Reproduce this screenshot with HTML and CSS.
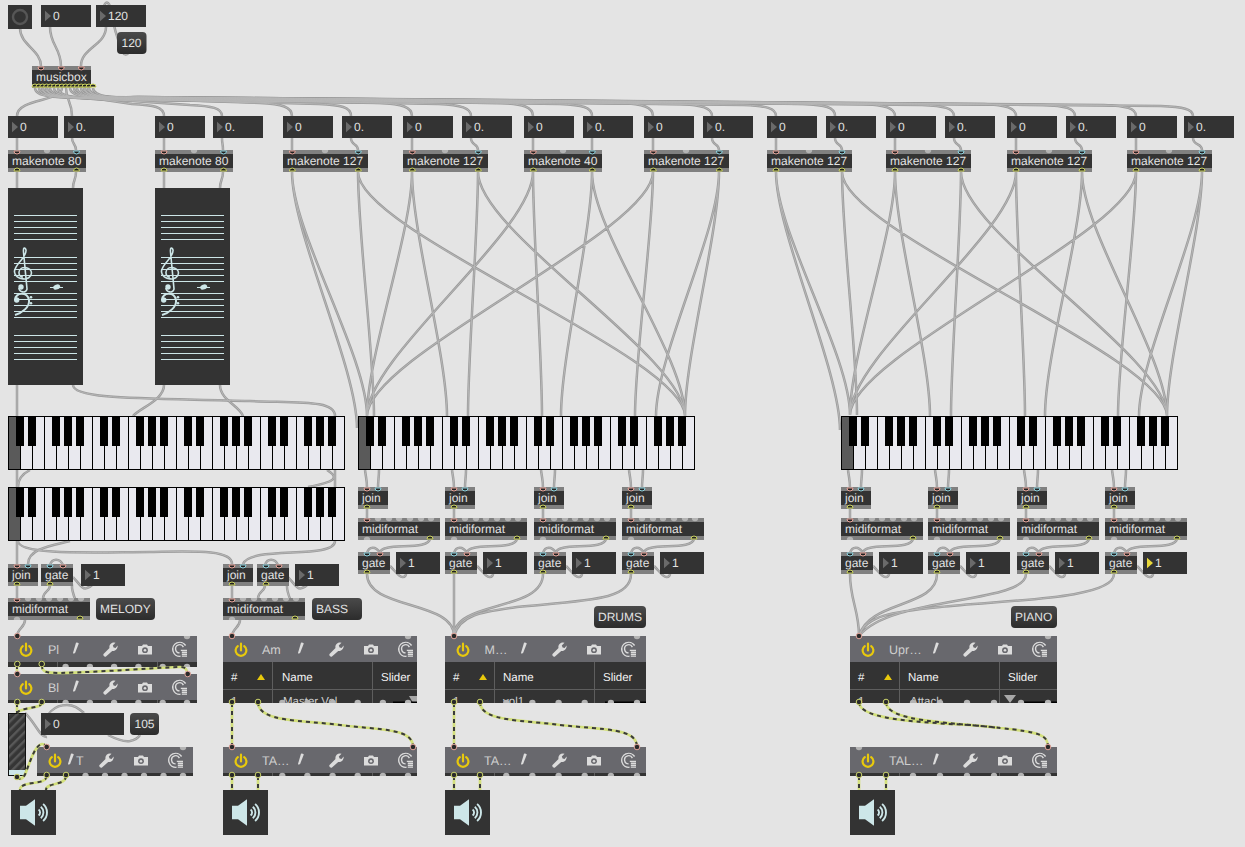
FILE: index.html
```html
<!DOCTYPE html>
<html lang="en">
<head>
<meta charset="utf-8">
<title>musicbox patcher</title>
<link rel="stylesheet" href="styles.css">
</head>
<body>
<svg class="patcher" width="1245" height="847" viewBox="0 0 1245 847" xmlns="http://www.w3.org/2000/svg">
<defs>
  <linearGradient id="msg" x1="0" y1="0" x2="0" y2="1"><stop offset="0" stop-color="#4a4a4a"/><stop offset="1" stop-color="#2c2c2c"/></linearGradient>
  <pattern id="hatch" width="6" height="6" patternUnits="userSpaceOnUse" patternTransform="rotate(-45)"><rect width="6" height="6" fill="#353535"/><rect width="6" height="2.4" fill="#585858"/></pattern>

  <!-- ports -->
  <path id="in-r" class="port-in" d="M-3 0a3 3 0 0 0 6 0z"/>
  <path id="in-b" class="port-blue" d="M-3 0a3 3 0 0 0 6 0z"/>
  <path id="out" class="port-out" d="M-3 0a3 3 0 0 1 6 0z"/>
  <circle id="sig-out" class="port-sig" r="2.8"/>
  <circle id="sig-in" class="port-sigin" r="2.8"/>
  <path id="bump-top" class="bump" d="M-3.2 0a3.2 3.2 0 0 0 6.4 0z"/>
  <path id="bump-bot" class="bump" d="M-3.2 0a3.2 3.2 0 0 1 6.4 0z"/>
  <polygon id="tri" class="tri" points="4,5.7 10,11 4,16.3"/>

  <!-- toolbar icons -->
  <g id="i-power" class="power"><path d="M-3.2 -4.4A5.4 5.4 0 1 0 3.2 -4.4"/><path d="M0 -6.8V0"/></g>
  <path id="i-pencil" class="glyph" d="M1 -5.8Q2.6 -6.2 3.8 -5L.2 4.2L-1.4 5.4L-1.8 3.8z"/>
  <path id="i-wrench" class="glyph" d="M-6.5 4.5L-.5 -1.5C-1.2 -4.5 1 -7 4 -7L5.5 -6.7L2.8 -4L3.6 -2L5.6 -1.6L7.6 -4C8 -1 5.5 2 2.2 1.5L-4 7C-5 8 -7.5 6 -6.5 4.5z"/>
  <g id="i-camera"><path class="glyph" d="M-7 -3.5H-3L-2 -5H2L3 -3.5H7V5H-7z"/><circle class="lens" cy=".7" r="2.9"/><circle class="glyph" cy=".7" r="1.3"/></g>
  <g id="i-preset" class="preset"><path d="M5.6 -4A7 7 0 1 0 .5 6.8"/><path d="M3.4 -2.4A4.1 4.1 0 1 0 -.4 3.4"/><path d="M.8 .9H7M1.8 2.8H7M1.8 4.7H7M1.8 6.6H7"/></g>

  <!-- bottom-edge bumps of plugin panels, one set per panel width -->
  <g id="b189"><use href="#bump-bot" x="57.6"/><use href="#bump-bot" x="81.9"/><use href="#bump-bot" x="106.1"/><use href="#bump-bot" x="130.4"/><use href="#bump-bot" x="154.7"/><use href="#bump-bot" x="179"/></g>
  <g id="b156"><use href="#bump-bot" x="48.5"/><use href="#bump-bot" x="68"/><use href="#bump-bot" x="87.5"/><use href="#bump-bot" x="107"/><use href="#bump-bot" x="126.5"/><use href="#bump-bot" x="146"/></g>
  <g id="b194"><use href="#bump-bot" x="59.3"/><use href="#bump-bot" x="84.4"/><use href="#bump-bot" x="109.6"/><use href="#bump-bot" x="134.7"/><use href="#bump-bot" x="159.9"/><use href="#bump-bot" x="185"/></g>
  <g id="b201"><use href="#bump-bot" x="61.3"/><use href="#bump-bot" x="87.4"/><use href="#bump-bot" x="113.6"/><use href="#bump-bot" x="139.7"/><use href="#bump-bot" x="165.9"/><use href="#bump-bot" x="192"/></g>
  <g id="b207"><use href="#bump-bot" x="63"/><use href="#bump-bot" x="90"/><use href="#bump-bot" x="117"/><use href="#bump-bot" x="144"/><use href="#bump-bot" x="171"/><use href="#bump-bot" x="198"/></g>

  <!-- piano keyboard -->
  <g id="kb">
    <rect class="kb-white" x=".5" y=".5" width="336" height="53"/>
    <rect class="kb-off" x="1" y="1" width="11.5" height="52"/>
    <path class="kb-lines" d="M12.5 0V54M24.5 0V54M36.5 0V54M48.5 0V54M60.5 0V54M72.5 0V54M84.5 0V54M96.5 0V54M108.5 0V54M120.5 0V54M132.5 0V54M144.5 0V54M156.5 0V54M168.5 0V54M180.5 0V54M192.5 0V54M204.5 0V54M216.5 0V54M228.5 0V54M240.5 0V54M252.5 0V54M264.5 0V54M276.5 0V54M288.5 0V54M300.5 0V54M312.5 0V54M324.5 0V54"/>
    <path class="kb-black" d="M8 0h8v30h-8zM20 0h8v30h-8zM44 0h8v30h-8zM56 0h8v30h-8zM68 0h8v30h-8zM92 0h8v30h-8zM104 0h8v30h-8zM128 0h8v30h-8zM140 0h8v30h-8zM152 0h8v30h-8zM176 0h8v30h-8zM188 0h8v30h-8zM212 0h8v30h-8zM224 0h8v30h-8zM236 0h8v30h-8zM260 0h8v30h-8zM272 0h8v30h-8zM296 0h8v30h-8zM308 0h8v30h-8zM320 0h8v30h-8z"/>
  </g>

  <!-- staff display -->
  <g id="nslider">
    <rect class="body" x="8" y="188" width="75" height="197"/>
    <path class="staff" d="M14 215.5H77M14 221.5H77M14 227.5H77M14 233.5H77M14 239.5H77M14 257.5H77M14 263.5H77M14 269.5H77M14 275.5H77M14 281.5H77M14 293.5H77M14 299.5H77M14 305.5H77M14 311.5H77M14 317.5H77M14 335.5H77M14 341.5H77M14 347.5H77M14 353.5H77M14 359.5H77"/>
    <path class="clef" d="M19 288C19 292 26 294 27 289L23.5 252C23 247 25 247 26 250C27 258 14 264 14.5 272C15 280 31 282 31.5 273C31.5 267 20 265 19 272C18.7 276 21 277 23 277"/>
    <circle class="ink" cx="21" cy="287" r="2.7"/>
    <path class="bass" d="M15.5 299C15 293 27 291 29 300C30 307 22 313 15 315"/>
    <circle class="ink" cx="16.7" cy="300" r="2.7"/>
    <circle class="ink" cx="31" cy="297.3" r="1.3"/>
    <circle class="ink" cx="31" cy="303.3" r="1.3"/>
    <path class="staff" d="M50 287.5H63"/>
    <ellipse class="ink" cx="56.7" cy="287" rx="3.6" ry="2.5" transform="rotate(-20 56.7 287)"/>
  </g>

  <!-- speaker -->
  <g id="ezdac">
    <rect class="body" width="45" height="45"/>
    <polygon class="ink" points="9,15.7 15,15.7 24,9.3 24,35.7 15,29.3 9,29.3"/>
    <path class="waves" d="M27.6 19.4A4 4 0 0 1 27.6 25.6M29.8 16.8A7.5 7.5 0 0 1 29.8 28.2M32.1 14.1A11 11 0 0 1 32.1 30.9"/>
  </g>

  <!-- cables inside one drum/piano channel -->
  <g id="col">
    <path d="M7 470C8 478 9 480 9 488M21 470C21 478 20 480 20 488M9 508V519M72 538C72 552 22 541 22 553M9 553C11 546 18 546 22 553M32 566C38 572 42 578 45 577C47 577 48 575 48 574"/>
  </g>
  <g id="mel">
    <path d="M9 586V598M72 619C72 605 63 595 64 585L55 566M42 585C42 592 36 590 35 598M65 577C72 585 75 590 79 588C82 587 83 586 84 585M42 565C44 558 52 558 55 565M17 620C17 628 9 628 9 637"/>
  </g>

  <!-- all patch cords -->
  <g id="cords">
    <path d="M20 28C20 45 41 50 41 66M50 27C50 45 61 48 61 66M106 27C106 45 81 48 81 66"/>
    <path d="M104 6C106 0 110 1 112 15C114 30 118 40 122 50C123 55 127 56 129 52"/>
    <path d="M62 88C62 102 17 98 17 116M66 88C66 100 72 102 72 116"/>
    <path d="M35 88C35 97 55 98 85 97L132 104C154 105 164 107 164 116"/>
    <path d="M39 88C39 97 59 98 89 98L190 105C212 106 222 108 222 116"/>
    <path d="M43 88C43 97 63 98 93 97.5L260 103C282 104 292 107 292 116"/>
    <path d="M47 88C47 97 67 98 97 98L319 104C341 105 351 107 351 116"/>
    <path d="M50 88C50 97 70 98 100 99L380 103C402 104 412 107 412 116"/>
    <path d="M54 88C54 97 74 98 104 97.5L439 104C461 105 471 108 471 116"/>
    <path d="M58 88C58 97 78 98 108 100L501 103C523 104 533 107 533 116"/>
    <path d="M70 88C70 97 90 98 120 97.5L560 104C582 105 592 107 592 116"/>
    <path d="M74 88C74 97 94 98 124 99L621 103C643 104 653 107 653 116"/>
    <path d="M77 88C77 97 97 98 127 98L680 104C702 105 712 108 712 116"/>
    <path d="M81 88C81 97 101 98 131 98L744 105C766 106 776 108 776 116"/>
    <path d="M85 88C85 97 105 98 135 97.5L803 104C825 105 835 107 835 116"/>
    <path d="M89 88C89 97 109 98 139 97L863 104C885 105 895 108 895 116"/>
    <path d="M93 88C93 97 113 98 143 98L922 105C944 106 954 108 954 116"/>
    <path d="M46 88C46 97 66 98 96 97L984 104C1006 105 1016 108 1016 116"/>
    <path d="M42 88C42 97 62 98 92 98L1043 105C1065 106 1075 108 1075 116"/>
    <path d="M84 88C84 97 104 98 134 97L1104 105C1126 106 1136 108 1136 116"/>
    <path d="M88 88C88 97 108 98 138 97L1161 106C1183 107 1193 109 1193 116"/>

    <path d="M17 138V150M72 138C72 144 76 144 76 150M164 138V150M222 138C222 144 223 144 223 150M292 138V150M351 138C351 146 358 143 358 150M412 138V150M471 138C471 146 478 143 478 150M533 138V150M592 138V150M653 138V150M712 138C712 146 719 143 719 150M776 138V150M835 138C835 146 842 143 842 150M895 138V150M954 138C954 146 961 143 961 150M1016 138V150M1075 138C1075 146 1082 143 1082 150M1136 138V150M1193 138C1193 146 1202 143 1202 150"/>

    <path d="M17 172V188M76 172C76 180 73 180 73 188M164 172V188M223 172C223 180 220 180 220 188"/>
    <path d="M17 385V564"/>
    <path d="M73 385C73 400 150 398 250 401C300 403 335 400 335 416V541C335 560 250 545 243 564"/>
    <path d="M164 385C164 400 140 408 133 416M220 385C220 400 240 406 243 416"/>
    <path d="M30 470C22 474 18 480 18 487M327 470C340 478 335 482 308 487"/>
    <path d="M18 541C18 556 100 552 150 552C200 551 232 550 232 564M70 541C55 545 28 548 28 564"/>

    <path d="M292 172C292 232 357 368 357 428M292 172C292 232 367 356 367 416M358 172C358 232 374 356 374 416M358 172C358 232 685 356 685 416M412 172C412 232 367 356 367 416M412 172C412 232 447 356 447 416M478 172C478 232 468 356 468 416M478 172C478 232 685 356 685 416M533 172C533 232 367 356 367 416M533 172C533 232 542 356 542 416M592 172C592 232 561 356 561 416M592 172C592 232 685 356 685 416M653 172C653 232 367 356 367 416M653 172C653 232 635 356 635 416M719 172C719 232 656 356 656 416M719 172C719 232 685 356 685 416"/>
    <path d="M776 172C776 232 840 370 840 430M776 172C776 232 850 355 850 415M842 172C842 232 857 355 857 415M842 172C842 232 1167 356 1167 416M895 172C895 232 850 355 850 415M895 172C895 232 930 356 930 416M961 172C961 232 951 356 951 416M961 172C961 232 1167 356 1167 416M1016 172C1016 232 850 355 850 415M1016 172C1016 232 1025 356 1025 416M1082 172C1082 232 1045 356 1045 416M1082 172C1082 232 1167 356 1167 416M1136 172C1136 232 850 355 850 415M1136 172C1136 232 1118 356 1118 416M1202 172C1202 232 1139 356 1139 416M1202 172C1202 232 1167 356 1167 416"/>

    <use href="#col" x="358"/><use href="#col" x="445"/><use href="#col" x="534"/><use href="#col" x="622"/>
    <use href="#col" x="841"/><use href="#col" x="928"/><use href="#col" x="1017"/><use href="#col" x="1105"/>
    <use href="#mel" x="8"/><use href="#mel" x="223"/>

    <path d="M367 574C367 610 454 600 454 636M454 574V636M543 574C543 612 454 600 454 636M631 574C631 600 590 600 517 607C480 612 460 615 454 636"/>
    <path d="M850 574C850 600 859 610 859 636M937 574C937 608 869 600 859 636M1026 574C1026 604 890 596 859 636M1114 574C1114 600 1000 600 940 607C890 612 866 616 859 636"/>

    <path d="M25 713C35 722 40 738 47 737M43 727C46 714 54 705 67 705C74 705 78 708 84 713M108 735C116 739 124 742 130 741C135 740 138 738 140 735"/>
  </g>

  <g id="sigcords">
    <path d="M17 665V674M41.7 665C42 672 46 673 60 673C100 672 170 667 180 667C186 667 187.7 670 187.7 675"/>
    <path d="M17 703V713M41.7 703C41.7 709 20 707 17 713"/>
    <path d="M17 777C20 781 24 778 26 772C30 762 35 745 42 744C45 744 46.7 746 46.7 748"/>
    <path d="M46.7 776C46.7 786 20 780 20 790M66 776C66 786 46 782 46 790"/>
    <path d="M232 703V747M258 702C258 722 300 720 340 725C380 730 413 728 413 747M232 776V790M258 776V790"/>
    <path d="M454 703V747M480 702C480 722 525 720 560 725C605 730 637 728 637 747M454 776V790M480 776V790"/>
    <path d="M859 702C859 725 960 722 1000 728C1040 732 1048 735 1048 747M886 702C886 722 950 722 1000 728M859 776V790M886 776V790"/>
  </g>
</defs>

<rect class="canvas" width="1245" height="847"/>

<use href="#cords" class="cord-edge"/>
<use href="#cords" class="cord-core"/>

<!-- top controls -->
<g transform="translate(8 5)"><rect class="num" width="24" height="24"/><circle class="ring" cx="12" cy="12" r="7"/></g>
<g transform="translate(41 5)"><rect class="num" width="50" height="22"/><use href="#tri"/><text x="12" y="15">0</text></g>
<g transform="translate(96 5)"><rect class="num" width="50" height="22"/><use href="#tri"/><text x="12" y="15">120</text></g>
<g transform="translate(117 32)"><rect class="msg" fill="url(#msg)" width="29.5" height="22" rx="4"/><text x="4.5" y="15">120</text></g>

<g transform="translate(32 66)"><rect class="strip" width="59" height="22"/><rect class="body" y="4" width="59" height="14"/><text x="4" y="15">musicbox</text></g>

<!-- number boxes -->
<g transform="translate(8 116)"><rect class="num" width="50" height="22"/><use href="#tri"/><text x="12" y="15">0</text></g>
<g transform="translate(64 116)"><rect class="num" width="50" height="22"/><use href="#tri"/><text x="12" y="15">0.</text></g>
<g transform="translate(155 116)"><rect class="num" width="50" height="22"/><use href="#tri"/><text x="12" y="15">0</text></g>
<g transform="translate(213 116)"><rect class="num" width="50" height="22"/><use href="#tri"/><text x="12" y="15">0.</text></g>
<g transform="translate(283 116)"><rect class="num" width="50" height="22"/><use href="#tri"/><text x="12" y="15">0</text></g>
<g transform="translate(342 116)"><rect class="num" width="50" height="22"/><use href="#tri"/><text x="12" y="15">0.</text></g>
<g transform="translate(403 116)"><rect class="num" width="50" height="22"/><use href="#tri"/><text x="12" y="15">0</text></g>
<g transform="translate(462 116)"><rect class="num" width="50" height="22"/><use href="#tri"/><text x="12" y="15">0.</text></g>
<g transform="translate(524 116)"><rect class="num" width="50" height="22"/><use href="#tri"/><text x="12" y="15">0</text></g>
<g transform="translate(583 116)"><rect class="num" width="50" height="22"/><use href="#tri"/><text x="12" y="15">0.</text></g>
<g transform="translate(644 116)"><rect class="num" width="50" height="22"/><use href="#tri"/><text x="12" y="15">0</text></g>
<g transform="translate(703 116)"><rect class="num" width="50" height="22"/><use href="#tri"/><text x="12" y="15">0.</text></g>
<g transform="translate(767 116)"><rect class="num" width="50" height="22"/><use href="#tri"/><text x="12" y="15">0</text></g>
<g transform="translate(826 116)"><rect class="num" width="50" height="22"/><use href="#tri"/><text x="12" y="15">0.</text></g>
<g transform="translate(886 116)"><rect class="num" width="50" height="22"/><use href="#tri"/><text x="12" y="15">0</text></g>
<g transform="translate(945 116)"><rect class="num" width="50" height="22"/><use href="#tri"/><text x="12" y="15">0.</text></g>
<g transform="translate(1007 116)"><rect class="num" width="50" height="22"/><use href="#tri"/><text x="12" y="15">0</text></g>
<g transform="translate(1066 116)"><rect class="num" width="50" height="22"/><use href="#tri"/><text x="12" y="15">0.</text></g>
<g transform="translate(1127 116)"><rect class="num" width="50" height="22"/><use href="#tri"/><text x="12" y="15">0</text></g>
<g transform="translate(1184 116)"><rect class="num" width="50" height="22"/><use href="#tri"/><text x="12" y="15">0.</text></g>

<!-- makenote objects -->
<g transform="translate(8 150)"><rect class="strip" width="78" height="22"/><rect class="body" y="4" width="78" height="14"/><text x="4" y="15">makenote 80</text><use href="#bump-top" x="39"/></g>
<g transform="translate(155 150)"><rect class="strip" width="78" height="22"/><rect class="body" y="4" width="78" height="14"/><text x="4" y="15">makenote 80</text><use href="#bump-top" x="39"/></g>
<g transform="translate(283 150)"><rect class="strip" width="85" height="22"/><rect class="body" y="4" width="85" height="14"/><text x="4" y="15">makenote 127</text><use href="#bump-top" x="42"/></g>
<g transform="translate(403 150)"><rect class="strip" width="85" height="22"/><rect class="body" y="4" width="85" height="14"/><text x="4" y="15">makenote 127</text><use href="#bump-top" x="42"/></g>
<g transform="translate(524 150)"><rect class="strip" width="78" height="22"/><rect class="body" y="4" width="78" height="14"/><text x="4" y="15">makenote 40</text><use href="#bump-top" x="39"/></g>
<g transform="translate(644 150)"><rect class="strip" width="85" height="22"/><rect class="body" y="4" width="85" height="14"/><text x="4" y="15">makenote 127</text><use href="#bump-top" x="42"/></g>
<g transform="translate(767 150)"><rect class="strip" width="85" height="22"/><rect class="body" y="4" width="85" height="14"/><text x="4" y="15">makenote 127</text><use href="#bump-top" x="42"/></g>
<g transform="translate(886 150)"><rect class="strip" width="85" height="22"/><rect class="body" y="4" width="85" height="14"/><text x="4" y="15">makenote 127</text><use href="#bump-top" x="42"/></g>
<g transform="translate(1007 150)"><rect class="strip" width="85" height="22"/><rect class="body" y="4" width="85" height="14"/><text x="4" y="15">makenote 127</text><use href="#bump-top" x="42"/></g>
<g transform="translate(1127 150)"><rect class="strip" width="85" height="22"/><rect class="body" y="4" width="85" height="14"/><text x="4" y="15">makenote 127</text><use href="#bump-top" x="42"/></g>

<use href="#nslider"/>
<use href="#nslider" x="147"/>

<use href="#kb" x="8" y="416"/>
<use href="#kb" x="8" y="487"/>
<use href="#kb" x="358" y="416"/>
<use href="#kb" x="841" y="416"/>

<!-- melody and bass channels -->
<g transform="translate(8 564)"><rect class="strip" width="30" height="22"/><rect class="body" y="4" width="30" height="14"/><text x="4" y="15">join</text></g>
<g transform="translate(41 564)"><rect class="strip" width="32" height="22"/><rect class="body" y="4" width="32" height="14"/><text x="4" y="15">gate</text></g>
<g transform="translate(81 564)"><rect class="num" width="44" height="22"/><use href="#tri"/><text x="12" y="15">1</text></g>
<g transform="translate(8 598)"><rect class="strip" width="82" height="22"/><rect class="body" y="4" width="82" height="14"/><text x="4" y="15">midiformat</text><use href="#bump-top" x="20"/><use href="#bump-top" x="31"/><use href="#bump-top" x="41"/><use href="#bump-top" x="52"/><use href="#bump-top" x="63"/><use href="#bump-top" x="73"/><use href="#bump-bot" x="9" y="22"/></g>
<g transform="translate(96 598)"><rect class="msg" fill="url(#msg)" width="59" height="22" rx="4"/><text x="4" y="15">MELODY</text></g>

<g transform="translate(223 564)"><rect class="strip" width="30" height="22"/><rect class="body" y="4" width="30" height="14"/><text x="4" y="15">join</text></g>
<g transform="translate(257 564)"><rect class="strip" width="32" height="22"/><rect class="body" y="4" width="32" height="14"/><text x="4" y="15">gate</text></g>
<g transform="translate(295 564)"><rect class="num" width="44" height="22"/><use href="#tri"/><text x="12" y="15">1</text></g>
<g transform="translate(223 598)"><rect class="strip" width="82" height="22"/><rect class="body" y="4" width="82" height="14"/><text x="4" y="15">midiformat</text><use href="#bump-top" x="20"/><use href="#bump-top" x="31"/><use href="#bump-top" x="41"/><use href="#bump-top" x="52"/><use href="#bump-top" x="63"/><use href="#bump-top" x="73"/><use href="#bump-bot" x="9" y="22"/></g>
<g transform="translate(312 598)"><rect class="msg" fill="url(#msg)" width="50" height="22" rx="4"/><text x="4" y="15">BASS</text></g>

<!-- drum and piano channels -->
<g transform="translate(358 0)"><g transform="translate(0 487)"><rect class="strip" width="30" height="22"/><rect class="body" y="4" width="30" height="14"/><text x="4" y="15">join</text></g><g transform="translate(0 518)"><rect class="strip" width="82" height="22"/><rect class="body" y="4" width="82" height="14"/><text x="4" y="15">midiformat</text><use href="#bump-top" x="20"/><use href="#bump-top" x="31"/><use href="#bump-top" x="41"/><use href="#bump-top" x="52"/><use href="#bump-top" x="63"/><use href="#bump-top" x="73"/><use href="#bump-bot" x="9" y="22"/></g><g transform="translate(0 552)"><rect class="strip" width="32" height="22"/><rect class="body" y="4" width="32" height="14"/><text x="4" y="15">gate</text></g><g transform="translate(38 552)"><rect class="num" width="44" height="22"/><use href="#tri"/><text x="12" y="15">1</text></g></g>
<g transform="translate(445 0)"><g transform="translate(0 487)"><rect class="strip" width="30" height="22"/><rect class="body" y="4" width="30" height="14"/><text x="4" y="15">join</text></g><g transform="translate(0 518)"><rect class="strip" width="82" height="22"/><rect class="body" y="4" width="82" height="14"/><text x="4" y="15">midiformat</text><use href="#bump-top" x="20"/><use href="#bump-top" x="31"/><use href="#bump-top" x="41"/><use href="#bump-top" x="52"/><use href="#bump-top" x="63"/><use href="#bump-top" x="73"/><use href="#bump-bot" x="9" y="22"/></g><g transform="translate(0 552)"><rect class="strip" width="32" height="22"/><rect class="body" y="4" width="32" height="14"/><text x="4" y="15">gate</text></g><g transform="translate(38 552)"><rect class="num" width="44" height="22"/><use href="#tri"/><text x="12" y="15">1</text></g></g>
<g transform="translate(534 0)"><g transform="translate(0 487)"><rect class="strip" width="30" height="22"/><rect class="body" y="4" width="30" height="14"/><text x="4" y="15">join</text></g><g transform="translate(0 518)"><rect class="strip" width="82" height="22"/><rect class="body" y="4" width="82" height="14"/><text x="4" y="15">midiformat</text><use href="#bump-top" x="20"/><use href="#bump-top" x="31"/><use href="#bump-top" x="41"/><use href="#bump-top" x="52"/><use href="#bump-top" x="63"/><use href="#bump-top" x="73"/><use href="#bump-bot" x="9" y="22"/></g><g transform="translate(0 552)"><rect class="strip" width="32" height="22"/><rect class="body" y="4" width="32" height="14"/><text x="4" y="15">gate</text></g><g transform="translate(38 552)"><rect class="num" width="44" height="22"/><use href="#tri"/><text x="12" y="15">1</text></g></g>
<g transform="translate(622 0)"><g transform="translate(0 487)"><rect class="strip" width="30" height="22"/><rect class="body" y="4" width="30" height="14"/><text x="4" y="15">join</text></g><g transform="translate(0 518)"><rect class="strip" width="82" height="22"/><rect class="body" y="4" width="82" height="14"/><text x="4" y="15">midiformat</text><use href="#bump-top" x="20"/><use href="#bump-top" x="31"/><use href="#bump-top" x="41"/><use href="#bump-top" x="52"/><use href="#bump-top" x="63"/><use href="#bump-top" x="73"/><use href="#bump-bot" x="9" y="22"/></g><g transform="translate(0 552)"><rect class="strip" width="32" height="22"/><rect class="body" y="4" width="32" height="14"/><text x="4" y="15">gate</text></g><g transform="translate(38 552)"><rect class="num" width="44" height="22"/><use href="#tri"/><text x="12" y="15">1</text></g></g>
<g transform="translate(594 606)"><rect class="msg" fill="url(#msg)" width="52" height="22" rx="4"/><text x="4" y="15">DRUMS</text></g>

<g transform="translate(841 0)"><g transform="translate(0 487)"><rect class="strip" width="30" height="22"/><rect class="body" y="4" width="30" height="14"/><text x="4" y="15">join</text></g><g transform="translate(0 518)"><rect class="strip" width="82" height="22"/><rect class="body" y="4" width="82" height="14"/><text x="4" y="15">midiformat</text><use href="#bump-top" x="20"/><use href="#bump-top" x="31"/><use href="#bump-top" x="41"/><use href="#bump-top" x="52"/><use href="#bump-top" x="63"/><use href="#bump-top" x="73"/><use href="#bump-bot" x="9" y="22"/></g><g transform="translate(0 552)"><rect class="strip" width="32" height="22"/><rect class="body" y="4" width="32" height="14"/><text x="4" y="15">gate</text></g><g transform="translate(38 552)"><rect class="num" width="44" height="22"/><use href="#tri"/><text x="12" y="15">1</text></g></g>
<g transform="translate(928 0)"><g transform="translate(0 487)"><rect class="strip" width="30" height="22"/><rect class="body" y="4" width="30" height="14"/><text x="4" y="15">join</text></g><g transform="translate(0 518)"><rect class="strip" width="82" height="22"/><rect class="body" y="4" width="82" height="14"/><text x="4" y="15">midiformat</text><use href="#bump-top" x="20"/><use href="#bump-top" x="31"/><use href="#bump-top" x="41"/><use href="#bump-top" x="52"/><use href="#bump-top" x="63"/><use href="#bump-top" x="73"/><use href="#bump-bot" x="9" y="22"/></g><g transform="translate(0 552)"><rect class="strip" width="32" height="22"/><rect class="body" y="4" width="32" height="14"/><text x="4" y="15">gate</text></g><g transform="translate(38 552)"><rect class="num" width="44" height="22"/><use href="#tri"/><text x="12" y="15">1</text></g></g>
<g transform="translate(1017 0)"><g transform="translate(0 487)"><rect class="strip" width="30" height="22"/><rect class="body" y="4" width="30" height="14"/><text x="4" y="15">join</text></g><g transform="translate(0 518)"><rect class="strip" width="82" height="22"/><rect class="body" y="4" width="82" height="14"/><text x="4" y="15">midiformat</text><use href="#bump-top" x="20"/><use href="#bump-top" x="31"/><use href="#bump-top" x="41"/><use href="#bump-top" x="52"/><use href="#bump-top" x="63"/><use href="#bump-top" x="73"/><use href="#bump-bot" x="9" y="22"/></g><g transform="translate(0 552)"><rect class="strip" width="32" height="22"/><rect class="body" y="4" width="32" height="14"/><text x="4" y="15">gate</text></g><g transform="translate(38 552)"><rect class="num" width="44" height="22"/><use href="#tri"/><text x="12" y="15">1</text></g></g>
<g transform="translate(1105 0)"><g transform="translate(0 487)"><rect class="strip" width="30" height="22"/><rect class="body" y="4" width="30" height="14"/><text x="4" y="15">join</text></g><g transform="translate(0 518)"><rect class="strip" width="82" height="22"/><rect class="body" y="4" width="82" height="14"/><text x="4" y="15">midiformat</text><use href="#bump-top" x="20"/><use href="#bump-top" x="31"/><use href="#bump-top" x="41"/><use href="#bump-top" x="52"/><use href="#bump-top" x="63"/><use href="#bump-top" x="73"/><use href="#bump-bot" x="9" y="22"/></g><g transform="translate(0 552)"><rect class="strip" width="32" height="22"/><rect class="body" y="4" width="32" height="14"/><text x="4" y="15">gate</text></g><g transform="translate(38 552)"><rect class="num" width="44" height="22"/><polygon class="tri-on" points="4,5.7 10,11 4,16.3"/><text x="12" y="15">1</text></g></g>
<g transform="translate(1011 606)"><rect class="msg" fill="url(#msg)" width="46" height="22" rx="4"/><text x="4" y="15">PIANO</text></g>

<!-- plugin panels: short -->
<svg x="8" y="636" width="189" height="31"><rect class="bar" width="189" height="26"/><rect class="body" y="26" width="189" height="5"/><path class="rule" d="M49.5 26V31M149.5 26V31"/><use href="#bump-top" x="179"/><use href="#b189" y="31"/><use href="#i-power" x="18" y="14.5"/><text class="pname" x="40" y="18">Pl</text><use href="#i-pencil" x="67" y="12.5"/><use href="#i-wrench" x="102" y="13.5"/><use href="#i-camera" x="137" y="13.5"/><use href="#i-preset" x="172" y="13.5"/></svg>
<svg x="8" y="674" width="189" height="29"><rect class="bar" width="189" height="26"/><rect class="body" y="26" width="189" height="3"/><path class="rule" d="M49.5 26V29M149.5 26V29"/><use href="#b189" y="29"/><use href="#i-power" x="18" y="14.5"/><text class="pname" x="40" y="18">Bl</text><use href="#i-pencil" x="67" y="12.5"/><use href="#i-wrench" x="102" y="13.5"/><use href="#i-camera" x="137" y="13.5"/><use href="#i-preset" x="172" y="13.5"/></svg>
<svg x="37" y="747" width="156" height="29"><rect class="bar" width="156" height="26"/><rect class="body" y="26" width="156" height="3"/><use href="#bump-top" x="146"/><use href="#b156" y="29"/><use href="#i-power" x="18" y="14.5"/><use href="#i-pencil" x="33" y="12.5"/><text class="pname" x="39" y="18">T</text><use href="#i-wrench" x="69" y="13.5"/><use href="#i-camera" x="104" y="13.5"/><use href="#i-preset" x="139" y="13.5"/></svg>

<!-- plugin panels: with parameter table -->
<svg x="223" y="636" width="194" height="67"><rect class="bar" width="194" height="26"/><rect class="body" y="26" width="194" height="41"/><path class="rule" d="M0 53.5H194M49.5 26V67M149.5 26V67"/><polygon class="sort" points="34,44 42,44 38,38"/><text class="th" x="8" y="45">#</text><text class="th" x="59" y="45">Name</text><text class="th" x="158" y="45">Slider</text><text class="td" x="8" y="69">1</text><text class="td" x="60" y="69">Master Vol</text><polygon class="thumb" points="186,60 194,60 194,67 190,67"/><rect class="track" x="170" y="65.5" width="24" height="1.5"/><use href="#bump-top" x="185"/><use href="#b194" y="67"/><use href="#i-power" x="18" y="14.5"/><text class="pname" x="39" y="18">Am</text><use href="#i-pencil" x="77" y="12.5"/><use href="#i-wrench" x="113" y="13.5"/><use href="#i-camera" x="148" y="13.5"/><use href="#i-preset" x="183" y="13.5"/></svg>
<svg x="445" y="636" width="201" height="67"><rect class="bar" width="201" height="26"/><rect class="body" y="26" width="201" height="41"/><path class="rule" d="M0 53.5H201M49.5 26V67M149.5 26V67"/><polygon class="sort" points="34,44 42,44 38,38"/><text class="th" x="8" y="45">#</text><text class="th" x="58" y="45">Name</text><text class="th" x="158" y="45">Slider</text><text class="td" x="8" y="69">1</text><text class="td" x="58" y="69">vol1</text><rect class="track" x="160" y="65.5" width="41" height="1.5"/><use href="#bump-top" x="192"/><use href="#b201" y="67"/><use href="#i-power" x="18" y="14.5"/><text class="pname" x="39.5" y="18">M…</text><use href="#i-pencil" x="78" y="12.5"/><use href="#i-wrench" x="114" y="13.5"/><use href="#i-camera" x="149" y="13.5"/><use href="#i-preset" x="184" y="13.5"/></svg>
<svg x="850" y="636" width="207" height="67"><rect class="bar" width="207" height="26"/><rect class="body" y="26" width="207" height="41"/><path class="rule" d="M0 53.5H207M49.5 26V67M149.5 26V67"/><polygon class="sort" points="34,44 42,44 38,38"/><text class="th" x="8" y="45">#</text><text class="th" x="58" y="45">Name</text><text class="th" x="158" y="45">Slider</text><text class="td" x="8" y="69">1</text><text class="td" x="60" y="69">Attack</text><polygon class="thumb" points="154,59 166,59 160,67"/><rect class="track" x="173" y="65.5" width="34" height="1.5"/><use href="#bump-top" x="198"/><use href="#b207" y="67"/><use href="#i-power" x="18" y="14.5"/><text class="pname" x="39" y="18">Upr…</text><use href="#i-pencil" x="85" y="12.5"/><use href="#i-wrench" x="120" y="13.5"/><use href="#i-camera" x="155" y="13.5"/><use href="#i-preset" x="190" y="13.5"/></svg>

<!-- plugin panels: TAL row -->
<svg x="223" y="747" width="194" height="29"><rect class="bar" width="194" height="26"/><rect class="body" y="26" width="194" height="3"/><path class="rule" d="M49.5 26V29M149.5 26V29"/><use href="#b194" y="29"/><use href="#i-power" x="18" y="14.5"/><text class="pname" x="39" y="18">TA…</text><use href="#i-pencil" x="77" y="12.5"/><use href="#i-wrench" x="113" y="13.5"/><use href="#i-camera" x="148" y="13.5"/><use href="#i-preset" x="183" y="13.5"/></svg>
<svg x="445" y="747" width="201" height="29"><rect class="bar" width="201" height="26"/><rect class="body" y="26" width="201" height="3"/><path class="rule" d="M49.5 26V29M149.5 26V29"/><use href="#b201" y="29"/><use href="#i-power" x="18" y="14.5"/><text class="pname" x="39" y="18">TA…</text><use href="#i-pencil" x="78" y="12.5"/><use href="#i-wrench" x="114" y="13.5"/><use href="#i-camera" x="149" y="13.5"/><use href="#i-preset" x="184" y="13.5"/></svg>
<svg x="850" y="747" width="207" height="29"><rect class="bar" width="207" height="26"/><rect class="body" y="26" width="207" height="3"/><path class="rule" d="M49.5 26V29M149.5 26V29"/><use href="#bump-top" x="9"/><use href="#b207" y="29"/><use href="#i-power" x="18" y="14.5"/><text class="pname" x="39" y="18">TAL…</text><use href="#i-pencil" x="85" y="12.5"/><use href="#i-wrench" x="120" y="13.5"/><use href="#i-camera" x="155" y="13.5"/><use href="#i-preset" x="190" y="13.5"/></svg>

<!-- gain slider, its readouts -->
<rect class="gain" fill="url(#hatch)" x="8.5" y="713.5" width="17" height="62"/>
<rect class="gain-knob" x="9" y="770" width="16" height="5"/>
<g transform="translate(41 713)"><rect class="num" width="83" height="22"/><use href="#tri"/><text x="12" y="15">0</text></g>
<g transform="translate(130 713)"><rect class="msg" fill="url(#msg)" width="29" height="22" rx="4"/><text x="4.5" y="15">105</text></g>

<use href="#ezdac" x="11" y="790"/>
<use href="#ezdac" x="223" y="790"/>
<use href="#ezdac" x="445" y="790"/>
<use href="#ezdac" x="850" y="790"/>

<use href="#sigcords" class="sig-base"/>
<use href="#sigcords" class="sig-dash"/>

<!-- ports on top of everything -->
<g>
  <use href="#in-r" x="41" y="67"/><use href="#in-r" x="61.3" y="67"/><use href="#in-r" x="81.3" y="67"/>
  <use href="#out" x="35" y="87"/><use href="#out" x="38.9" y="87"/><use href="#out" x="42.7" y="87"/><use href="#out" x="46.6" y="87"/><use href="#out" x="50.4" y="87"/><use href="#out" x="54.3" y="87"/><use href="#out" x="58.1" y="87"/><use href="#out" x="62" y="87"/><use href="#out" x="65.8" y="87"/><use href="#out" x="69.7" y="87"/><use href="#out" x="73.5" y="87"/><use href="#out" x="77.4" y="87"/><use href="#out" x="81.2" y="87"/><use href="#out" x="85" y="87"/><use href="#out" x="89" y="87"/><use href="#out" x="93" y="87"/>

  <use href="#in-r" x="17" y="151"/><use href="#in-b" x="76.5" y="151"/><use href="#out" x="17" y="171"/><use href="#out" x="76.5" y="171"/>
  <use href="#in-r" x="164" y="151"/><use href="#in-b" x="223.5" y="151"/><use href="#out" x="164" y="171"/><use href="#out" x="223.5" y="171"/>
  <use href="#in-r" x="292.3" y="151"/><use href="#in-b" x="358.3" y="151"/><use href="#out" x="292.3" y="171"/><use href="#out" x="358.3" y="171"/>
  <use href="#in-r" x="412.3" y="151"/><use href="#in-b" x="478.3" y="151"/><use href="#out" x="412.3" y="171"/><use href="#out" x="478.3" y="171"/>
  <use href="#in-r" x="533.3" y="151"/><use href="#in-b" x="592.3" y="151"/><use href="#out" x="533.3" y="171"/><use href="#out" x="592.3" y="171"/>
  <use href="#in-r" x="653.3" y="151"/><use href="#in-b" x="719.3" y="151"/><use href="#out" x="653.3" y="171"/><use href="#out" x="719.3" y="171"/>
  <use href="#in-r" x="776" y="151"/><use href="#in-b" x="842" y="151"/><use href="#out" x="776" y="171"/><use href="#out" x="842" y="171"/>
  <use href="#in-r" x="895" y="151"/><use href="#in-b" x="961" y="151"/><use href="#out" x="895" y="171"/><use href="#out" x="961" y="171"/>
  <use href="#in-r" x="1016" y="151"/><use href="#in-b" x="1082" y="151"/><use href="#out" x="1016" y="171"/><use href="#out" x="1082" y="171"/>
  <use href="#in-r" x="1136" y="151"/><use href="#in-b" x="1202" y="151"/><use href="#out" x="1136" y="171"/><use href="#out" x="1202" y="171"/>

  <!-- join/gate/midiformat ports, melody + bass -->
  <use href="#in-r" x="17" y="565"/><use href="#in-b" x="28" y="565"/><use href="#out" x="17" y="585"/><use href="#in-b" x="50" y="565"/><use href="#in-r" x="63" y="565"/><use href="#out" x="50" y="585"/><use href="#in-r" x="17" y="599"/><use href="#out" x="80" y="619"/>
  <use href="#in-r" x="232" y="565"/><use href="#in-b" x="243" y="565"/><use href="#out" x="232" y="585"/><use href="#in-b" x="266" y="565"/><use href="#in-r" x="279" y="565"/><use href="#out" x="266" y="585"/><use href="#in-r" x="232" y="599"/><use href="#out" x="295" y="619"/>

  <!-- drums -->
  <use href="#in-r" x="367" y="488"/><use href="#in-b" x="378" y="488"/><use href="#out" x="367" y="508"/><use href="#in-r" x="367" y="519"/><use href="#out" x="430" y="539"/><use href="#in-b" x="367" y="553"/><use href="#in-r" x="380" y="553"/><use href="#out" x="367" y="573"/>
  <use href="#in-r" x="454" y="488"/><use href="#in-b" x="465" y="488"/><use href="#out" x="454" y="508"/><use href="#in-r" x="454" y="519"/><use href="#out" x="517" y="539"/><use href="#in-b" x="454" y="553"/><use href="#in-r" x="467" y="553"/><use href="#out" x="454" y="573"/>
  <use href="#in-r" x="543" y="488"/><use href="#in-b" x="554" y="488"/><use href="#out" x="543" y="508"/><use href="#in-r" x="543" y="519"/><use href="#out" x="606" y="539"/><use href="#in-b" x="543" y="553"/><use href="#in-r" x="556" y="553"/><use href="#out" x="543" y="573"/>
  <use href="#in-r" x="631" y="488"/><use href="#in-b" x="642" y="488"/><use href="#out" x="631" y="508"/><use href="#in-r" x="631" y="519"/><use href="#out" x="694" y="539"/><use href="#in-b" x="631" y="553"/><use href="#in-r" x="644" y="553"/><use href="#out" x="631" y="573"/>

  <!-- piano -->
  <use href="#in-r" x="850" y="488"/><use href="#in-b" x="861" y="488"/><use href="#out" x="850" y="508"/><use href="#in-r" x="850" y="519"/><use href="#out" x="913" y="539"/><use href="#in-b" x="850" y="553"/><use href="#in-r" x="863" y="553"/><use href="#out" x="850" y="573"/>
  <use href="#in-r" x="937" y="488"/><use href="#in-b" x="948" y="488"/><use href="#out" x="937" y="508"/><use href="#in-r" x="937" y="519"/><use href="#out" x="1000" y="539"/><use href="#in-b" x="937" y="553"/><use href="#in-r" x="950" y="553"/><use href="#out" x="937" y="573"/>
  <use href="#in-r" x="1026" y="488"/><use href="#in-b" x="1037" y="488"/><use href="#out" x="1026" y="508"/><use href="#in-r" x="1026" y="519"/><use href="#out" x="1089" y="539"/><use href="#in-b" x="1026" y="553"/><use href="#in-r" x="1039" y="553"/><use href="#out" x="1026" y="573"/>
  <use href="#in-r" x="1114" y="488"/><use href="#in-b" x="1125" y="488"/><use href="#out" x="1114" y="508"/><use href="#in-r" x="1114" y="519"/><use href="#out" x="1177" y="539"/><use href="#in-b" x="1114" y="553"/><use href="#in-r" x="1127" y="553"/><use href="#out" x="1114" y="573"/>

  <!-- plugin panel ports -->
  <use href="#sig-in" x="17.3" y="636"/><use href="#sig-out" x="17.3" y="664"/><use href="#sig-out" x="41.7" y="664"/>
  <use href="#sig-in" x="17.3" y="674"/><use href="#sig-in" x="187.7" y="674"/><use href="#sig-out" x="17.3" y="702"/><use href="#sig-out" x="41.7" y="702"/>
  <use href="#sig-in" x="46.7" y="747"/><use href="#sig-out" x="46.7" y="775"/><use href="#sig-out" x="66" y="775"/>
  <use href="#sig-out" x="17" y="777"/>
  <use href="#sig-in" x="232" y="636"/><use href="#sig-out" x="232" y="702"/><use href="#sig-out" x="258" y="702"/>
  <use href="#sig-in" x="232" y="747"/><use href="#sig-in" x="413" y="747"/><use href="#sig-out" x="232" y="775"/><use href="#sig-out" x="258" y="775"/>
  <use href="#sig-in" x="454" y="636"/><use href="#sig-out" x="454" y="702"/><use href="#sig-out" x="480" y="702"/>
  <use href="#sig-in" x="454" y="747"/><use href="#sig-in" x="637" y="747"/><use href="#sig-out" x="454" y="775"/><use href="#sig-out" x="480" y="775"/>
  <use href="#sig-in" x="859" y="636"/><use href="#sig-out" x="859" y="702"/><use href="#sig-out" x="886" y="702"/>
  <use href="#sig-in" x="1048" y="747"/><use href="#sig-out" x="859" y="775"/><use href="#sig-out" x="886" y="775"/>
</g>
</svg>
</body>
</html>
```

FILE: styles.css
```css
html, body {
  margin: 0;
  padding: 0;
  background: #e4e4e4;
  overflow: hidden;
}

.patcher {
  display: block;
  font-family: "Liberation Sans", Arial, sans-serif;
  font-size: 12px;
  text-rendering: geometricPrecision;
}

.patcher text {
  fill: #e2e2e2;
}

.canvas { fill: #e4e4e4; }

/* object parts */
.num, .body { fill: #333333; }
.strip { fill: #808080; }
.msg { stroke: none; }
.ring { fill: none; stroke: #565656; stroke-width: 2.4; }
.tri { fill: #6a6a6a; }
.tri-on { fill: #e8d83a; }

/* ports */
.port-in { fill: #222222; stroke: #e8a49a; stroke-width: 1; }
.port-blue { fill: #222222; stroke: #8fd4e0; stroke-width: 1; }
.port-out { fill: #222222; stroke: #cbd25e; stroke-width: 1; }
.port-sig { fill: #2a2a2a; stroke: #cdd56c; stroke-width: 1; }
.port-sigin { fill: #2a2a2a; stroke: #e3a79d; stroke-width: 1; }
.bump { fill: #b4b4b4; }

/* cords */
#cords, #sigcords, #col, #mel { fill: none; }
.cord-edge { stroke: #9c9c9c; stroke-width: 2.5; fill: none; }
.cord-core { stroke: #b6b6b6; stroke-width: 1; fill: none; }
.sig-base { stroke: #d3e07c; stroke-width: 2.7; fill: none; }
.sig-dash { stroke: #3a3a3a; stroke-width: 2; stroke-dasharray: 4 4; fill: none; }

/* keyboards */
.kb-white { fill: #e9e9ef; stroke: #000000; stroke-width: 1; }
.kb-off { fill: #5a5a5a; }
.kb-lines { fill: none; stroke: #000000; stroke-width: 1; }
.kb-black { fill: #000000; }

/* staff */
.staff { fill: none; stroke: #cde6e8; stroke-width: 1; }
.clef { fill: none; stroke: #cde6e8; stroke-width: 1.6; }
.bass { fill: none; stroke: #cde6e8; stroke-width: 2; }
.ink { fill: #cde6e8; }
.waves { fill: none; stroke: #cde6e8; stroke-width: 1.9; }

/* plugin panels */
.bar { fill: #68686d; }
.rule { fill: none; stroke: #5e5e5e; stroke-width: 1; }
.power { fill: none; stroke: #e8c90c; stroke-width: 2.2; stroke-linecap: round; }
.glyph { fill: #dcdcdc; }
.lens { fill: #68686d; }
.preset { fill: none; stroke: #dcdcdc; stroke-width: 1.4; }
.patcher .pname { fill: #cfcfcf; font-size: 12.5px; }
.patcher .th { fill: #f4f4f4; font-size: 11.5px; }
.patcher .td { fill: #cfcfcf; font-size: 11.5px; }
.sort { fill: #e8c90c; }
.thumb { fill: #a8a8a8; }
.track { fill: #000000; }

/* gain slider */
.gain { stroke: #111111; stroke-width: 1; }
.gain-knob { fill: #cde6e8; }
```
